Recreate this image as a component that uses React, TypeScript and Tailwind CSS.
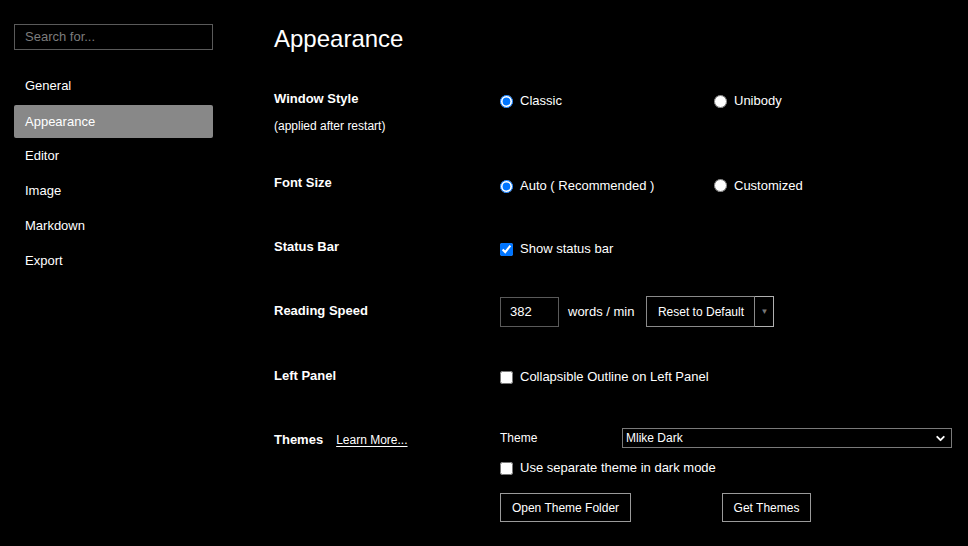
import { ChevronDown } from "lucide-react";

const navItems = ["General", "Appearance", "Editor", "Image", "Markdown", "Export"];

const Radio = ({ label, checked }: { label: string; checked?: boolean }) => (
  <label className="flex items-center gap-[7px]">
    <input type="radio" defaultChecked={checked} name={label} className="size-[13px]" />
    <span>{label}</span>
  </label>
);

const Check = ({ label, checked }: { label: string; checked?: boolean }) => (
  <label className="flex items-center gap-[7px]">
    <input type="checkbox" defaultChecked={checked} className="size-[13px]" />
    <span>{label}</span>
  </label>
);

const Row = ({
  label,
  className,
  labelClass,
  children,
}: {
  label: React.ReactNode;
  className: string;
  labelClass?: string;
  children: React.ReactNode;
}) => (
  <div className={`flex ${className}`}>
    <div className={`w-[226px] shrink-0 ${labelClass ?? ""}`}>{label}</div>
    <div className="flex-1">{children}</div>
  </div>
);

export default function App() {
  return (
    <div className="flex h-[546px] w-full overflow-hidden bg-black text-[13px] leading-5 text-white font-['Liberation_Sans',Arial,sans-serif]">
      <aside className="w-[274px] shrink-0 pl-[14px] pt-[24px]">
        <div className="h-[26px] w-[199px] border border-[#5a5a5a] px-[10px] text-[13px] leading-6 text-[#7c7c7c]">
          Search for...
        </div>
        <nav className="mt-[19px] flex w-[199px] flex-col gap-[2px]">
          {navItems.map((item) => (
            <div
              key={item}
              className={`flex h-[33px] items-center rounded-[2px] px-[11px] ${
                item === "Appearance" ? "mt-[1px] -mb-[1px] bg-[#888888]" : ""
              }`}
            >
              {item}
            </div>
          ))}
        </nav>
      </aside>

      <main className="flex-1 pt-[25px]">
        <h1 className="text-[24px] leading-7">Appearance</h1>

        <div className="mt-[36px] flex flex-col">
          <Row
            className="h-[84px]"
            label={
              <>
                <div className="font-bold">Window Style</div>
                <div className="mt-[7px] text-[12px]">(applied after restart)</div>
              </>
            }
          >
            <div className="flex pt-[2px]">
              <div className="w-[214px]">
                <Radio label="Classic" checked />
              </div>
              <Radio label="Unibody" />
            </div>
          </Row>

          <Row className="h-[64px]" label={<div className="font-bold">Font Size</div>}>
            <div className="flex pt-[2px]">
              <div className="w-[214px] pt-[1px]">
                <Radio label="Auto ( Recommended )" checked />
              </div>
              <Radio label="Customized" />
            </div>
          </Row>

          <Row className="h-[60px]" label={<div className="font-bold">Status Bar</div>}>
            <div className="pt-[2px]">
              <Check label="Show status bar" checked />
            </div>
          </Row>

          <Row
            className="h-[69px]"
            labelClass="pt-[4px]"
            label={<div className="font-bold">Reading Speed</div>}
          >
            <div className="-mt-[1px] flex items-center">
              <div className="flex h-[30px] w-[59px] items-center border border-[#5a5a5a] pl-[9px]">
                382
              </div>
              <span className="ml-[9px]">words / min</span>
              <div className="ml-[12px] flex h-[31px]">
                <div className="flex w-[109px] items-center justify-center border border-[#8a8a8a] text-[12px]">
                  Reset to Default
                </div>
                <div className="flex w-[19px] items-center justify-center border border-l-0 border-[#b0b0b0] text-[8px] text-[#777]">
                  ▼
                </div>
              </div>
            </div>
          </Row>

          <Row className="h-[62px]" label={<div className="font-bold">Left Panel</div>}>
            <div className="pt-[1px]">
              <Check label="Collapsible Outline on Left Panel" />
            </div>
          </Row>

          <Row
            className="flex-1"
            labelClass="pt-[2px]"
            label={
              <div className="flex items-center">
                <span className="font-bold">Themes</span>
                <span className="ml-[13px] text-[12px] underline underline-offset-2">Learn More...</span>
              </div>
            }
          >
            <div className="flex items-center">
              <span className="w-[122px] text-[12px]">Theme</span>
              <div className="flex h-[20px] w-[330px] items-center justify-between border border-[#7a7a7a] pl-[3px] pr-[4px] text-[12px]">
                Mlike Dark
                <ChevronDown className="size-[13px]" strokeWidth={3.5} />
              </div>
            </div>
            <div className="mt-[10px]">
              <Check label="Use separate theme in dark mode" />
            </div>
            <div className="mt-[15px] flex">
              <div className="flex h-[29px] w-[131px] items-center justify-center border border-[#9a9a9a] text-[12px]">
                Open Theme Folder
              </div>
              <div className="ml-[91px] flex h-[29px] w-[89px] items-center justify-center border border-[#9a9a9a] text-[12px]">
                Get Themes
              </div>
            </div>
          </Row>
        </div>
      </main>
    </div>
  );
}
